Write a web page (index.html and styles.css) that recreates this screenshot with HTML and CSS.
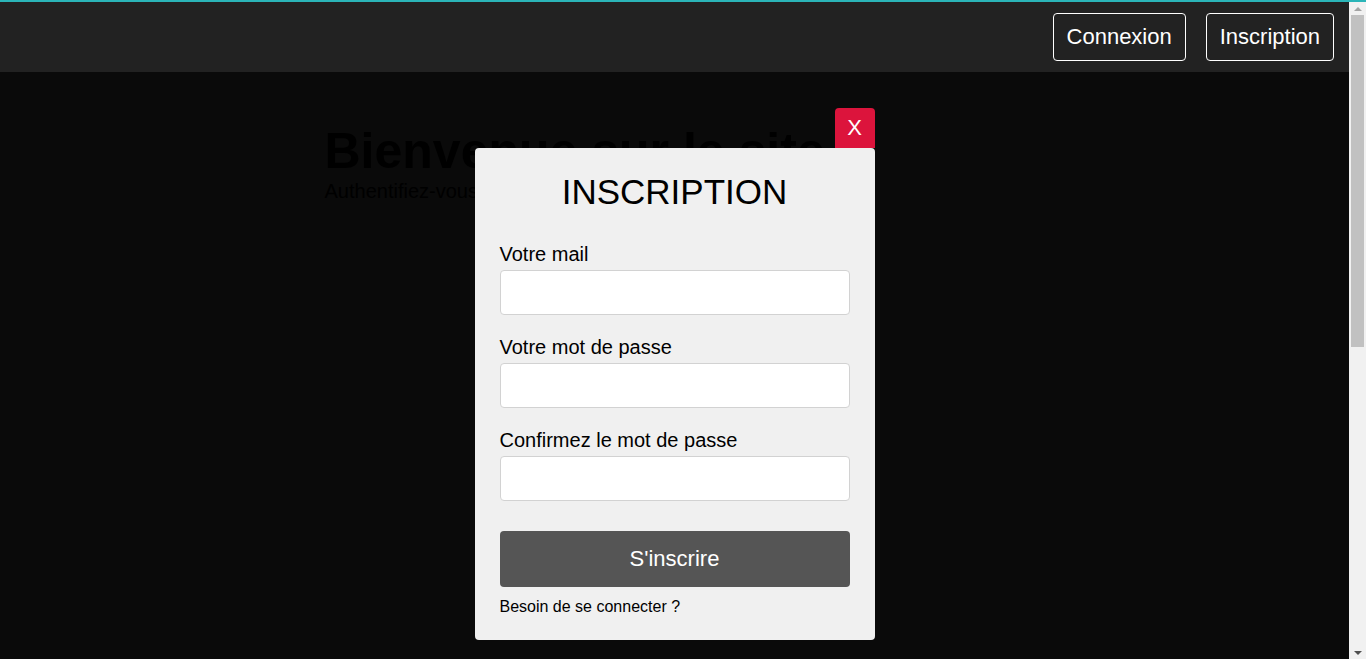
FILE: index.html
```html
<!DOCTYPE html>
<html lang="fr">
<head>
<meta charset="utf-8">
<title>Inscription</title>
<link rel="stylesheet" href="styles.css">
</head>
<body>
<div class="accent-line"></div>
<header class="topbar">
  <button class="nav-btn">Connexion</button>
  <button class="nav-btn">Inscription</button>
</header>
<main class="page">
  <div class="container">
    <h1 class="hero-title">Bienvenue sur le site</h1>
    <p class="hero-sub">Authentifiez-vous pour continuer</p>
  </div>
</main>
<div class="overlay">
  <div class="modal">
    <button class="modal-close">X</button>
    <h2 class="modal-title">INSCRIPTION</h2>
    <form class="form">
      <div class="field">
        <label class="field-label">Votre mail</label>
        <input class="field-input" type="email">
      </div>
      <div class="field">
        <label class="field-label">Votre mot de passe</label>
        <input class="field-input" type="password">
      </div>
      <div class="field">
        <label class="field-label">Confirmez le mot de passe</label>
        <input class="field-input" type="password">
      </div>
      <button class="submit" type="button">S'inscrire</button>
      <a class="switch-link">Besoin de se connecter ?</a>
    </form>
  </div>
</div>
<div class="scrollbar">
  <div class="sb-arrow sb-up"></div>
  <div class="sb-track"><div class="sb-thumb"></div></div>
  <div class="sb-arrow sb-down"></div>
</div>
</body>
</html>
```

FILE: styles.css
```css
html, body {
  margin: 0;
  padding: 0;
}
body {
  font-family: "Liberation Sans", Arial, sans-serif;
  background: #0a0a0a;
  color: #000;
  margin-right: 17px;
}
.accent-line {
  position: fixed;
  top: 0;
  left: 0;
  right: 0;
  height: 2px;
  background: #2bb5b8;
  z-index: 5;
}
.topbar {
  margin-top: 2px;
  background: #222;
  height: 70px;
  display: flex;
  justify-content: flex-end;
  align-items: center;
  gap: 20px;
  padding-right: 15px;
}
.nav-btn {
  font-family: inherit;
  font-size: 22px;
  color: #fff;
  background: transparent;
  border: 1px solid #fff;
  border-radius: 4px;
  height: 48px;
  padding: 0 13px;
}
.page {
  background: #0a0a0a;
  min-height: 1170px;
}
.container {
  width: 700px;
  margin: 0 auto;
  padding-top: 50px;
}
.hero-title {
  margin: 0;
  font-size: 50px;
  font-weight: bold;
  color: #000;
}
.hero-sub {
  margin: 0;
  font-size: 20px;
  color: #000;
}
.overlay {
  position: fixed;
  top: 148px;
  left: 0;
  right: 17px;
  display: flex;
  justify-content: center;
}
.modal {
  position: relative;
  width: 350px;
  padding: 24px 25px 24px;
  background: #f0f0f0;
  border-radius: 4px;
}
.modal-close {
  position: absolute;
  top: -40px;
  right: 0;
  width: 40px;
  height: 40px;
  border: none;
  border-radius: 4px 4px 0 0;
  background: #dc143c;
  color: #fff;
  font-family: inherit;
  font-size: 22px;
  padding: 0;
}
.modal-title {
  margin: 0;
  text-align: center;
  font-size: 35px;
  font-weight: normal;
}
.form {
  margin-top: 31px;
  display: flex;
  flex-direction: column;
}
.field {
  display: flex;
  flex-direction: column;
  gap: 4px;
  margin-bottom: 22px;
}
.field + .field {
  margin-top: -1px;
}
.field-label {
  font-size: 20px;
}
.field-input {
  box-sizing: border-box;
  height: 45px;
  width: 100%;
  border: 1px solid #d2d2d2;
  border-radius: 4px;
  background: #fff;
  margin: 0;
}
.submit {
  margin-top: 8px;
  height: 56px;
  border: none;
  border-radius: 4px;
  background: #555;
  color: #fff;
  font-family: inherit;
  font-size: 22px;
}
.switch-link {
  margin-top: 11px;
  font-size: 16px;
  color: #000;
}
.scrollbar {
  position: fixed;
  top: 2px;
  right: 0;
  bottom: 0;
  width: 17px;
  background: #f1f1f1;
  display: flex;
  flex-direction: column;
  z-index: 4;
}
.sb-arrow {
  height: 13px;
  display: flex;
  align-items: center;
  justify-content: center;
}
.sb-up::before {
  content: "";
  border-left: 4px solid transparent;
  border-right: 4px solid transparent;
  border-bottom: 4px solid #a3a3a3;
}
.sb-down::before {
  content: "";
  border-left: 4px solid transparent;
  border-right: 4px solid transparent;
  border-top: 4px solid #505050;
}
.sb-track {
  flex: 1;
  padding: 0 2px;
}
.sb-thumb {
  height: 332px;
  background: #c1c1c1;
}
```
